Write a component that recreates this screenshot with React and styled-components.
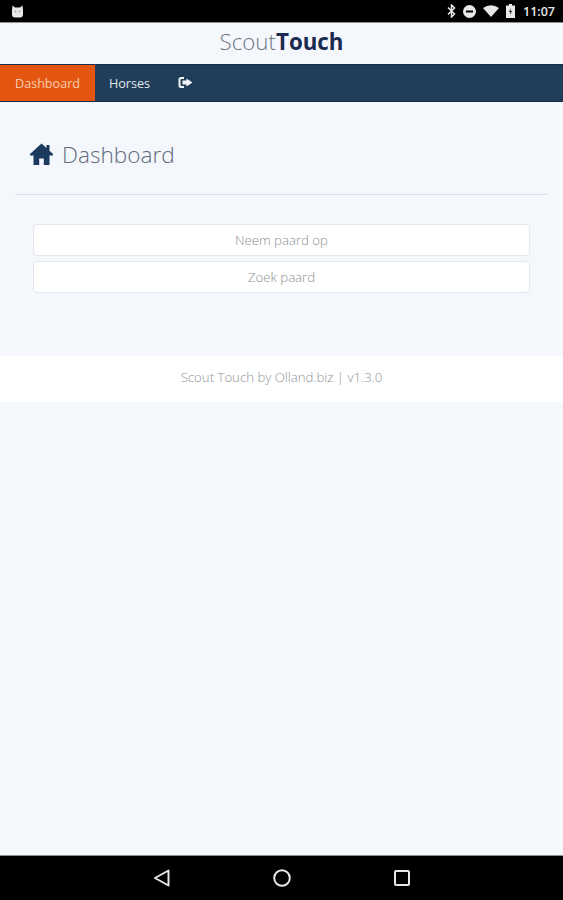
import React from 'react';
import styled, { createGlobalStyle } from 'styled-components';

const GlobalStyle = createGlobalStyle`
  html, body {
    margin: 0;
    padding: 0;
    height: 100%;
    background: #f4f7fb;
    font-family: "Open Sans", "Liberation Sans", sans-serif;
  }
`;

const Screen = styled.div`
  width: 563px;
  height: 900px;
  display: flex;
  flex-direction: column;
  overflow: hidden;
  background: #f4f7fb;
`;

const StatusBar = styled.div`
  height: 22px;
  flex: none;
  background: #000;
  border-bottom: 1px solid #8d9094;
  display: flex;
  align-items: center;
  justify-content: space-between;
  padding: 0 8px 0 11px;
  color: #e8e8e8;
`;

const StatusIcons = styled.div`
  display: flex;
  align-items: center;
  gap: 7px;
`;

const Clock = styled.span`
  font-size: 12.5px;
  font-weight: 600;
  margin-left: 1px;
`;

const Header = styled.header`
  height: 41px;
  box-sizing: border-box;
  flex: none;
  display: flex;
  align-items: center;
  justify-content: center;
  font-size: 22.3px;
  font-weight: 300;
  color: #6d7684;
  padding-bottom: 4px;

  b {
    font-weight: 700;
    color: #1a2a50;
  }
`;

const NavBar = styled.nav`
  height: 38px;
  box-sizing: border-box;
  flex: none;
  display: flex;
  background: #203d59;
  border-top: 1px solid #16304a;
  border-bottom: 1px solid #102a48;
`;

const NavItem = styled.a`
  display: flex;
  align-items: center;
  padding: 0 ${(p) => (p.$active ? '15px' : '14px')};
  font-size: 12.6px;
  font-weight: 400;
  color: ${(p) => (p.$active ? '#f7cdb0' : '#e3e8ee')};
  background: ${(p) => (p.$active ? '#e4560f' : 'transparent')};
`;

const Main = styled.main`
  flex: none;
  padding: 0 15px;
  height: 254px;
`;

const PageTitle = styled.h1`
  margin: 0;
  height: 93px;
  box-sizing: border-box;
  padding: 12px 0 0 15px;
  display: flex;
  align-items: center;
  gap: 9px;
  font-size: 22.6px;
  font-weight: 300;
  color: #5f6c7d;
  border-bottom: 1px solid #d9dfe6;
`;

const Actions = styled.div`
  padding: 29px 18px 0;
  display: flex;
  flex-direction: column;
  gap: 5px;
`;

const ActionButton = styled.button`
  height: 32px;
  padding: 0;
  background: #fff;
  border: 1px solid #e2e7f0;
  border-radius: 4px;
  font-family: inherit;
  font-size: 13.2px;
  font-weight: 300;
  color: #8b8f94;
  text-align: center;
`;

const Footer = styled.footer`
  height: 46px;
  box-sizing: border-box;
  flex: none;
  background: #fff;
  display: flex;
  align-items: center;
  justify-content: center;
  padding-bottom: 4px;
  font-size: 13.2px;
  font-weight: 300;
  color: #8f9499;
`;

const Spacer = styled.div`
  flex: 1;
`;

const SystemNav = styled.div`
  height: 45px;
  flex: none;
  background: #000;
  border-top: 1px solid #8d9094;
  box-sizing: border-box;
  display: flex;
  align-items: center;
  justify-content: space-between;
  padding: 0 153px;
`;

const CatIcon = () => (
  <svg width="13" height="13" viewBox="0 0 13 13" fill="#e8e8e8">
    <path d="M1.5 0.5 L4 2.5 H9 L11.5 0.5 L12 5 V9.5 Q12 12.5 9 12.5 H4 Q1 12.5 1 9.5 V5 Z" />
    <circle cx="4.5" cy="6.5" r="1" fill="#aaa" />
    <circle cx="8.5" cy="6.5" r="1" fill="#aaa" />
  </svg>
);

const BluetoothIcon = () => (
  <svg width="9" height="14" viewBox="0 0 9 14" fill="none" stroke="#e8e8e8" strokeWidth="1.5">
    <path d="M1 3.5 L7.5 10 L4.5 13 V1 L7.5 4 L1 10.5" />
  </svg>
);

const DndIcon = () => (
  <svg width="13" height="13" viewBox="0 0 13 13">
    <circle cx="6.5" cy="6.5" r="6.5" fill="#e8e8e8" />
    <rect x="3" y="5.5" width="7" height="2" fill="#000" />
  </svg>
);

const WifiIcon = () => (
  <svg width="16" height="12" viewBox="0 0 16 12" fill="#e8e8e8">
    <path d="M0 3 Q8 -2.5 16 3 L8 12 Z" />
  </svg>
);

const BatteryIcon = () => (
  <svg width="9" height="14" viewBox="0 0 9 14">
    <path d="M3 0 H6 V1.5 H9 V14 H0 V1.5 H3 Z" fill="#e8e8e8" />
    <path d="M5 4 L3 8 H4.5 L4 11 L6 7 H4.5 Z" fill="#000" />
  </svg>
);

const SignOutIcon = () => (
  <svg width="15" height="14" viewBox="0 0 15 14" fill="#f2f5f8">
    <path d="M6 1 H3 Q0.5 1 0.5 3.5 V9.5 Q0.5 12 3 12 H6 V10 H3.5 Q2.5 10 2.5 9 V4 Q2.5 3 3.5 3 H6 Z" />
    <path d="M8.5 2.5 L14.5 6.5 L8.5 10.5 V8.5 H4.5 V4.5 H8.5 Z" />
  </svg>
);

const HomeIcon = () => (
  <svg width="23" height="23" viewBox="0 0 23 23" fill="#1c3a5e">
    <path d="M11.5 0.5 L16.5 5 V2 H19.5 V7.8 L23 11 V12.6 H19.5 V22 H13.8 V15.5 H9.2 V22 H3.5 V12.6 H0 V11 Z" />
  </svg>
);

const BackIcon = () => (
  <svg width="17" height="18" viewBox="0 0 17 18" fill="none" stroke="#e6e6e6" strokeWidth="2" strokeLinejoin="round">
    <path d="M15.5 1.5 V16.5 L2 9 Z" />
  </svg>
);

const HomeButtonIcon = () => (
  <svg width="18" height="18" viewBox="0 0 18 18" fill="none" stroke="#e6e6e6" strokeWidth="2">
    <circle cx="9" cy="9" r="7.8" />
  </svg>
);

const RecentsIcon = () => (
  <svg width="16" height="16" viewBox="0 0 16 16" fill="none" stroke="#e6e6e6" strokeWidth="2">
    <rect x="1" y="1" width="14" height="14" rx="1" />
  </svg>
);

const App = () => (
  <>
    <GlobalStyle />
    <Screen>
      <StatusBar>
        <CatIcon />
        <StatusIcons>
          <BluetoothIcon />
          <DndIcon />
          <WifiIcon />
          <BatteryIcon />
          <Clock>11:07</Clock>
        </StatusIcons>
      </StatusBar>
      <Header>
        Scout<b>Touch</b>
      </Header>
      <NavBar>
        <NavItem $active>Dashboard</NavItem>
        <NavItem>Horses</NavItem>
        <NavItem>
          <SignOutIcon />
        </NavItem>
      </NavBar>
      <Main>
        <PageTitle>
          <HomeIcon />
          Dashboard
        </PageTitle>
        <Actions>
          <ActionButton>Neem paard op</ActionButton>
          <ActionButton>Zoek paard</ActionButton>
        </Actions>
      </Main>
      <Footer>Scout Touch by Olland.biz | v1.3.0</Footer>
      <Spacer />
      <SystemNav>
        <BackIcon />
        <HomeButtonIcon />
        <RecentsIcon />
      </SystemNav>
    </Screen>
  </>
);

export default App;
